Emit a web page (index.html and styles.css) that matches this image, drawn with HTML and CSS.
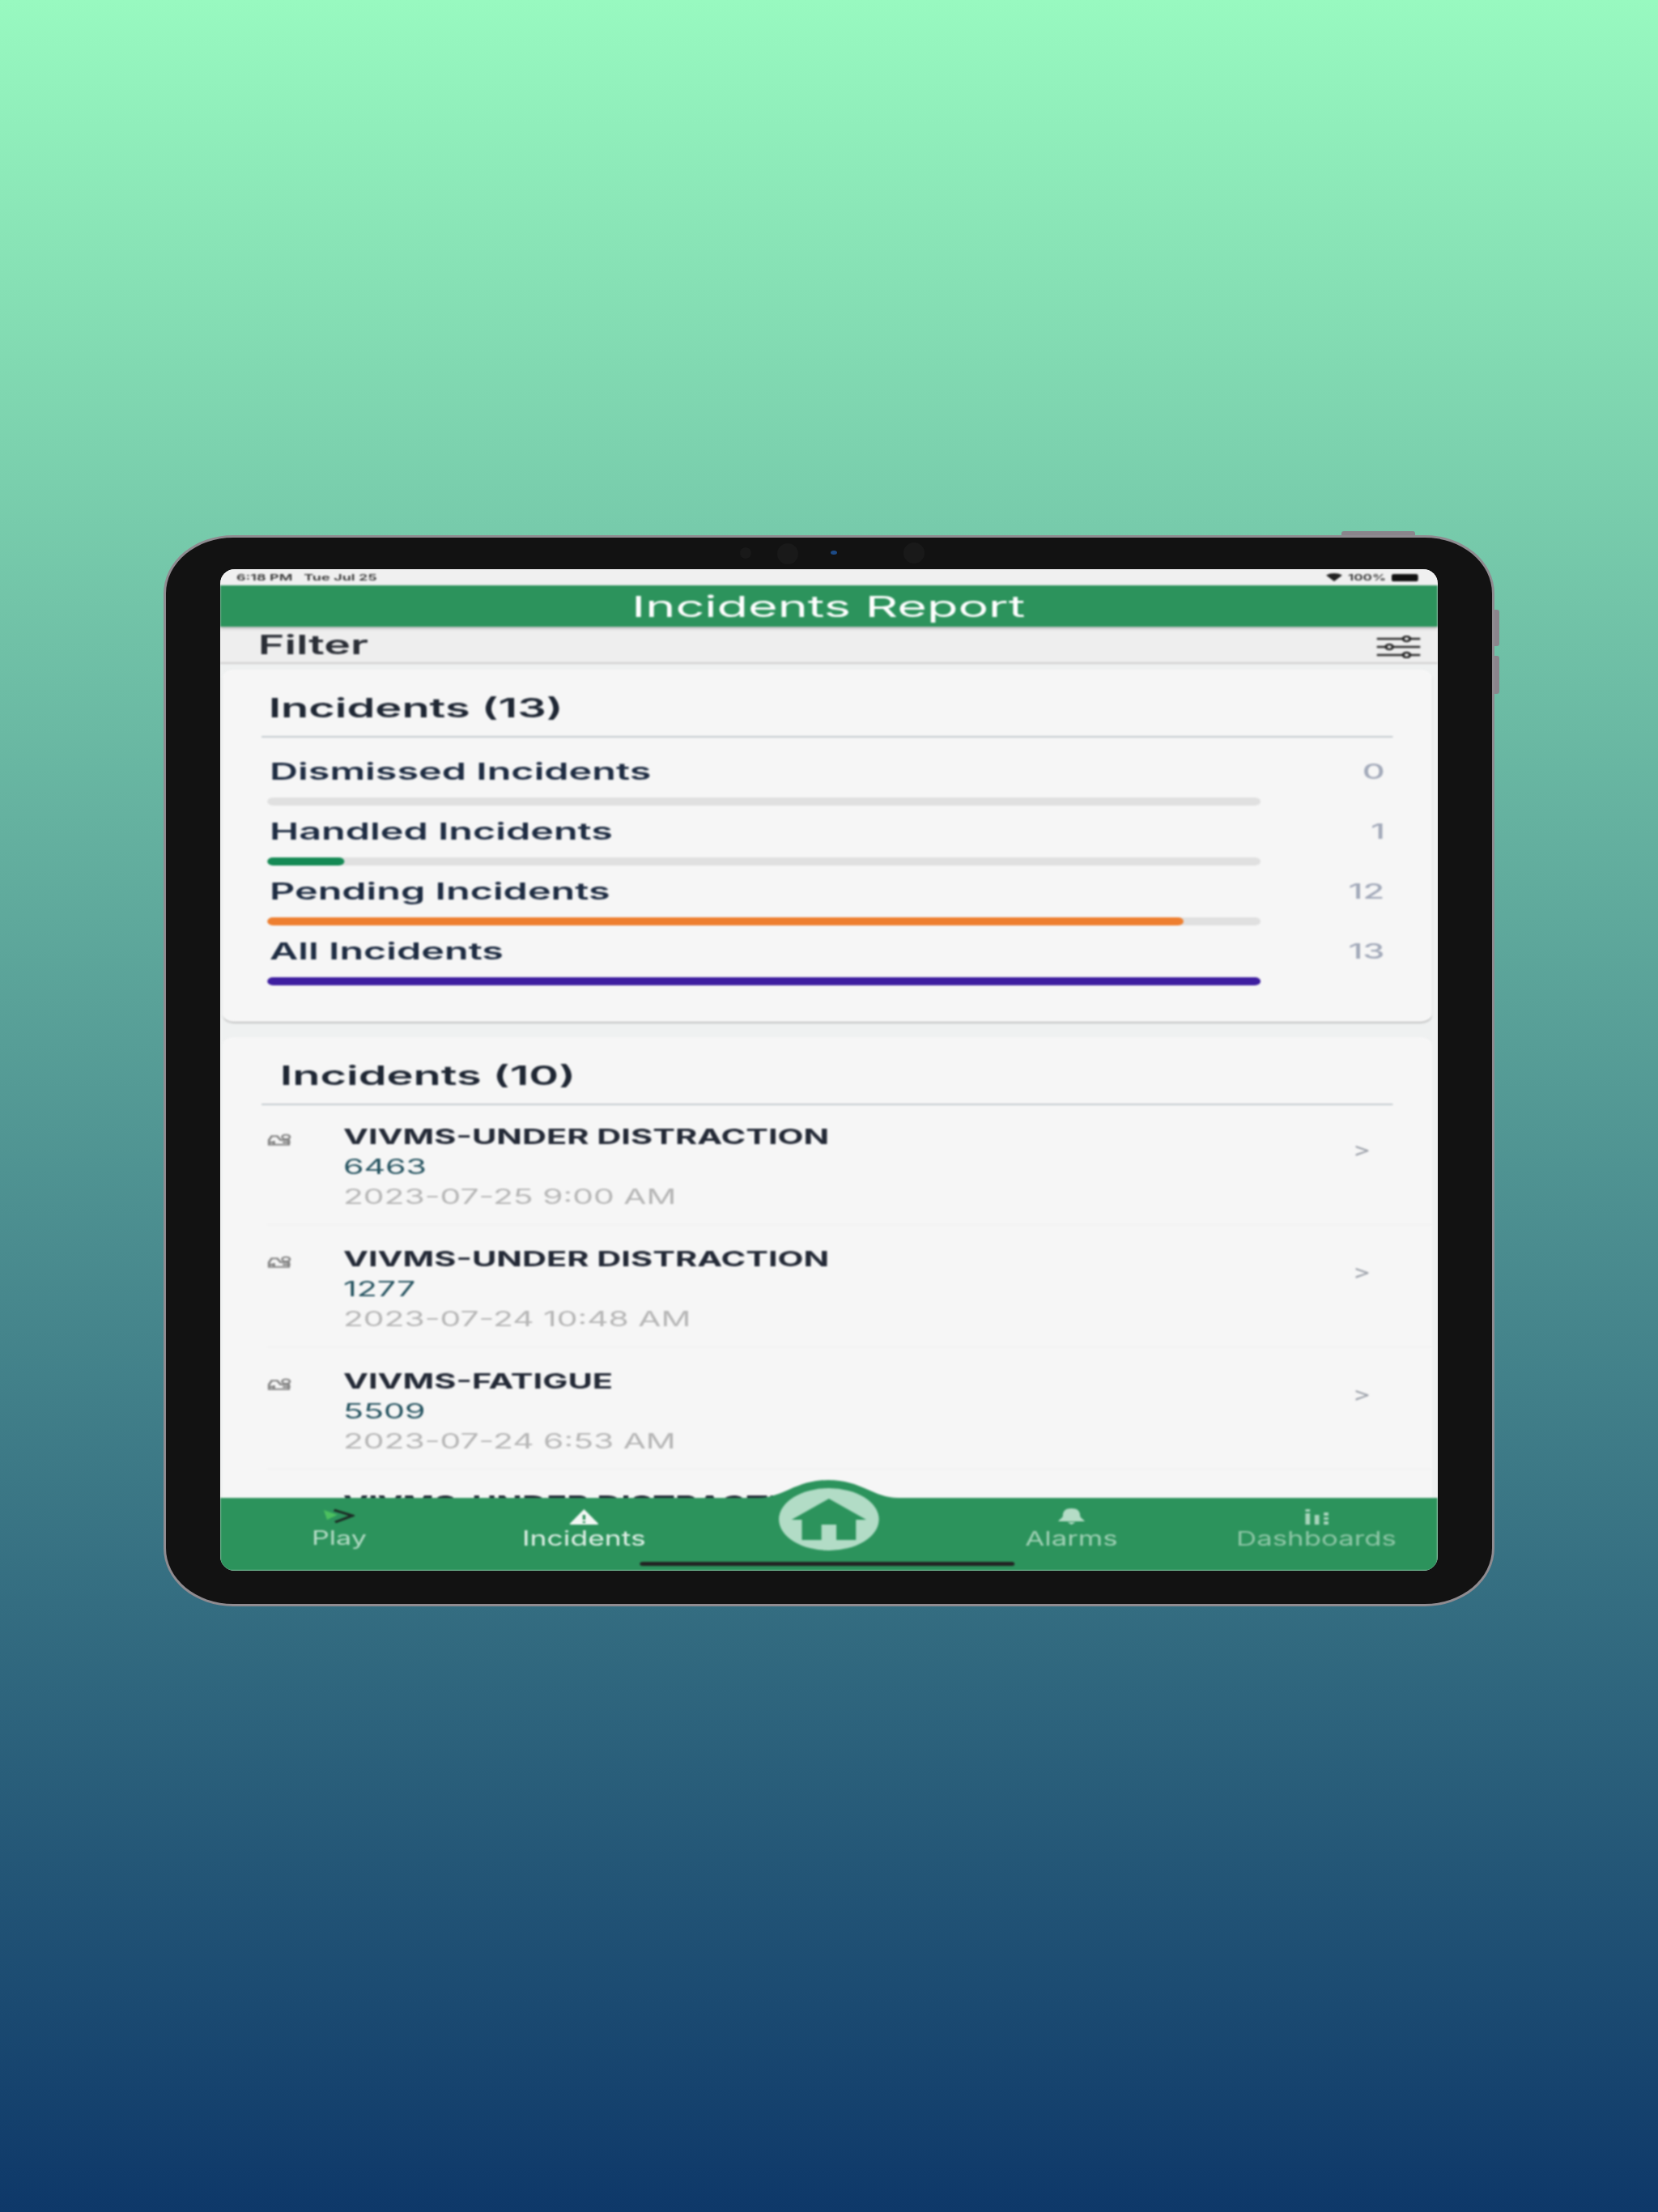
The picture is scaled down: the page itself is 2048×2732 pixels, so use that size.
FILE: index.html
```html
<!DOCTYPE html>
<html lang="en">
<head>
  <meta charset="UTF-8" />
  <meta name="viewport" content="width=device-width, initial-scale=1" />
  <title>Incidents Report</title>
  <link rel="stylesheet" href="styles.css">
</head>
<body>

  <!-- Tablet frame -->
  <div class="device">
    <span class="side-btn top-btn"></span>
    <span class="side-btn vol-up"></span>
    <span class="side-btn vol-down"></span>
    <span class="cam cam-small"></span>
    <span class="cam cam-big"></span>
    <span class="cam cam-blue"></span>
    <span class="cam cam-right"></span>

    <div class="screen">
      <!-- the app is a stretched screenshot, so the whole thing gets scaled sideways -->
      <div class="app">

        <div class="status-bar">
          <span class="status-left">6:18 PM &nbsp; Tue Jul 25</span>
          <div class="status-right">
            <svg class="wifi" viewBox="0 0 14 10"><path d="M0 2.5 C4 -0.8 10 -0.8 14 2.5 L7 10 Z" /></svg>
            <span class="status-pct">100%</span>
            <span class="battery"></span>
          </div>
        </div>

        <div class="header"><span class="header-title">Incidents Report</span></div>

        <div class="filter-row">
          <span class="filter-label">Filter</span>
          <svg class="sliders" viewBox="0 0 38 28">
            <g stroke="#2b2b2b" stroke-width="2.4" fill="#eee">
              <path d="M0 4 H38 M0 14 H38 M0 24 H38" />
              <circle cx="26" cy="4" r="3" />
              <circle cx="11" cy="14" r="3" />
              <circle cx="26" cy="24" r="3" />
            </g>
          </svg>
        </div>

        <div class="content">
          <div class="card stats-card">
            <div class="card-head"><h2>Incidents (13)</h2></div>

            <div class="stat">
              <div class="stat-top"><span class="stat-name">Dismissed Incidents</span><span class="stat-num">0</span></div>
              <div class="bar"></div>
            </div>
            <div class="stat">
              <div class="stat-top"><span class="stat-name">Handled Incidents</span><span class="stat-num">1</span></div>
              <div class="bar"><div class="fill green" style="width: 7.7%"></div></div>
            </div>
            <div class="stat">
              <div class="stat-top"><span class="stat-name">Pending Incidents</span><span class="stat-num">12</span></div>
              <div class="bar"><div class="fill orange" style="width: 92.3%"></div></div>
            </div>
            <div class="stat">
              <div class="stat-top"><span class="stat-name">All Incidents</span><span class="stat-num">13</span></div>
              <div class="bar"><div class="fill purple" style="width: 100%"></div></div>
            </div>
          </div>

          <div class="card list-card">
            <div class="card-head list-head"><h2>Incidents (10)</h2></div>

            <div class="incident">
              <svg class="car" viewBox="0 0 22 16"><use href="#carIcon" /></svg>
              <div class="incident-text">
                <div class="incident-title">VIVMS-UNDER DISTRACTION</div>
                <div class="incident-num">6463</div>
                <div class="incident-date">2023-07-25 9:00 AM</div>
              </div>
              <span class="chevron">&gt;</span>
            </div>
            <div class="incident">
              <svg class="car" viewBox="0 0 22 16"><use href="#carIcon" /></svg>
              <div class="incident-text">
                <div class="incident-title">VIVMS-UNDER DISTRACTION</div>
                <div class="incident-num">1277</div>
                <div class="incident-date">2023-07-24 10:48 AM</div>
              </div>
              <span class="chevron">&gt;</span>
            </div>
            <div class="incident">
              <svg class="car" viewBox="0 0 22 16"><use href="#carIcon" /></svg>
              <div class="incident-text">
                <div class="incident-title">VIVMS-FATIGUE</div>
                <div class="incident-num">5509</div>
                <div class="incident-date">2023-07-24 6:53 AM</div>
              </div>
              <span class="chevron">&gt;</span>
            </div>
            <div class="incident">
              <svg class="car" viewBox="0 0 22 16"><use href="#carIcon" /></svg>
              <div class="incident-text">
                <div class="incident-title">VIVMS-UNDER DISTRACTION</div>
              </div>
            </div>
          </div>
        </div>

        <!-- Bottom tabs -->
        <div class="tabs">
          <svg class="bump" viewBox="0 0 122 22"><path d="M0 22 C22 22 32 0 61 0 C90 0 100 22 122 22 Z" /></svg>

          <div class="tab tab-play">
            <svg viewBox="0 0 27 20">
              <path d="M0 2 L12 8 L3 14 Z" fill="#4cc05f" />
              <path d="M9 2 L25 9 L10 17" fill="none" stroke="#1c2a24" stroke-width="3" />
            </svg>
            <span>Play</span>
          </div>
          <div class="tab tab-incidents">
            <svg viewBox="0 0 27 20">
              <path d="M13.5 1 L26 19 Q26 20 25 20 H2 Q1 20 1 19 Z" fill="#f4f8f5" />
              <path d="M13.5 8 V14 M13.5 16 V18" stroke="#2c935c" stroke-width="2.4" />
            </svg>
            <span>Incidents</span>
          </div>
          <div class="tab tab-home">
            <div class="home-btn">
              <svg viewBox="0 0 65 51">
                <path d="M32.5 0 L65 26 H56 V51 H39 V32 H26 V51 H9 V26 H0 Z" fill="#2c935c" />
              </svg>
            </div>
          </div>
          <div class="tab tab-alarms">
            <svg viewBox="0 0 27 20">
              <path d="M13.5 0 C7 0 6 5 6 9 C6 12 3 13 2 16 H25 C24 13 21 12 21 9 C21 5 20 0 13.5 0 Z M10 17 H17 L13.5 20 Z" fill="#b5dcc6" />
            </svg>
            <span>Alarms</span>
          </div>
          <div class="tab tab-dash">
            <svg viewBox="0 0 27 20">
              <path d="M4 1 H8 V4 H4 Z M4 6 H8 V20 H4 Z M12 8 H16 V20 H12 Z M20 5 H24 V9 H20 Z M20 11 H24 V14 H20 Z M20 16 H24 V20 H20 Z" fill="#a9d5bc" />
            </svg>
            <span>Dashboards</span>
          </div>

          <div class="home-indicator"></div>
        </div>

      </div>
    </div>
  </div>

  <svg class="defs">
    <symbol id="carIcon" viewBox="0 0 22 16">
      <g fill="none" stroke="#858585" stroke-width="2.2">
        <path d="M1.5 14 V8 L4 3 H9 L12 8 H19.5 V14 Z" />
        <path d="M6 9 V14 M1 11 H5 M14 11 H21" />
      </g>
      <ellipse cx="17" cy="4" rx="3.5" ry="2.8" fill="none" stroke="#858585" stroke-width="2" />
    </symbol>
  </svg>

</body>
</html>
```

FILE: styles.css
```css
html, body {
  margin: 0;
  padding: 0;
}

body {
  height: 2732px;
  padding-top: 661px;
  box-sizing: border-box;
  background: linear-gradient(180deg, #98f9c0 0%, #0e3869 100%);
  font-family: 'Inter', 'Liberation Sans', sans-serif;
  overflow: hidden;
}

.defs {
  display: none;
}

/* Frame */
.device {
  position: relative;
  width: 1644px;
  height: 1323px;
  margin: 0 auto;
  padding: 39px 67px 0;
  box-sizing: border-box;
  background: #121212;
  border: 3px solid #8f8b90;
  border-radius: 86px / 72px;
}

.side-btn {
  position: absolute;
  background: #8a858c;
}

.top-btn {
  left: 1452px;
  top: -8px;
  width: 91px;
  height: 5px;
  border-radius: 3px 3px 0 0;
}

.vol-up, .vol-down {
  left: 1641px;
  width: 6px;
  border-radius: 0 3px 3px 0;
}

.vol-up {
  top: 89px;
  height: 45px;
}

.vol-down {
  top: 146px;
  height: 47px;
}

.cam {
  position: absolute;
  border-radius: 50%;
  background: #191919;
}

.cam-small {
  left: 709px;
  top: 12px;
  width: 14px;
  height: 14px;
}

.cam-big {
  left: 755px;
  top: 7px;
  width: 26px;
  height: 26px;
}

.cam-blue {
  left: 821px;
  top: 16px;
  width: 8px;
  height: 5px;
  background: #1c4a86;
}

.cam-right {
  left: 911px;
  top: 6px;
  width: 26px;
  height: 26px;
}

.screen {
  width: 1504px;
  height: 1237px;
  overflow: hidden;
  border-radius: 18px;
  background: #eff1f1;
}

/* 1059px wide app, stretched to the 1504px of the screen */
.app {
  width: 1059px;
  height: 1237px;
  display: flex;
  flex-direction: column;
  transform: scaleX(1.42);
  transform-origin: left top;
  filter: blur(0.8px);
}

.status-bar {
  height: 20px;
  flex: none;
  padding: 0 17px 0 14px;
  display: flex;
  justify-content: space-between;
  align-items: center;
  background: #f0f0f0;
  color: #333;
  font-size: 11px;
  font-weight: 600;
}

.status-left {
  transform: scaleX(1.16);
  transform-origin: left center;
}

.status-right {
  display: flex;
  align-items: center;
  gap: 5px;
}

.status-pct {
  transform: scaleX(1.1);
  transform-origin: right center;
}

.wifi {
  width: 14px;
  height: 10px;
  margin-right: 3px;
  fill: #222;
}

.battery {
  width: 23px;
  height: 9px;
  border-radius: 2px;
  background: #111;
}

.header {
  height: 51px;
  flex: none;
  position: relative;
  z-index: 2;
  background: #2c935c;
  color: #fff;
  font-size: 36px;
  line-height: 53px;
  text-align: center;
  box-shadow: 0 2px 3px rgba(0,0,0,0.25);
}

.header-title {
  display: inline-block;
  transform: scaleX(1.23);
}

.filter-row {
  height: 46px;
  flex: none;
  padding: 0 15px 0 33px;
  box-sizing: border-box;
  display: flex;
  justify-content: space-between;
  align-items: center;
  background: #eeeeee;
  border-bottom: 2px solid #cfcfcf;
}

.filter-label {
  font-size: 32px;
  font-weight: 600;
  color: #2a2e36;
  transform: scaleX(1.22);
  transform-origin: left center;
}

.sliders {
  width: 38px;
  height: 28px;
  margin-top: 5px;
}

.content {
  flex: 1;
  min-height: 0;
  overflow: hidden;
  padding: 7px 5px 0 2px;
}

.card {
  background: #f6f6f6;
  border-radius: 10px;
}

.stats-card {
  height: 435px;
  box-sizing: border-box;
  box-shadow: 0 2px 2px -1px rgba(0,0,0,0.35);
}

.list-card {
  margin-top: 19px;
  padding-bottom: 40px;
}

.card-head {
  height: 84px;
  margin: 0 34px;
  box-sizing: border-box;
  padding-left: 6px;
  border-bottom: 2px solid #c5ccd0;
  display: flex;
  align-items: center;
}

.list-head {
  padding-left: 16px;
  margin-bottom: -3px;
}

.card-head h2 {
  margin: 12px 0 0;
  font-size: 32px;
  font-weight: 600;
  color: #1e2633;
  transform: scaleX(1.23);
  transform-origin: left center;
}

.stat {
  margin-left: 39px;
  padding-right: 41px;
  margin-bottom: 10px;
}

.stats-card .card-head {
  margin-bottom: 20px;
}

.stat-top {
  height: 44px;
  padding-left: 2px;
  display: flex;
  justify-content: space-between;
  align-items: center;
  font-size: 28px;
  font-weight: 600;
  color: #1e2c42;
}

.stat-name {
  transform: scaleX(1.22);
  transform-origin: left center;
}

.stat-top .stat-num {
  font-size: 25px;
  font-weight: 500;
  color: #a3aaba;
  transform: scaleX(1.22);
  transform-origin: right center;
}

.bar {
  width: 864px;
  height: 10px;
  margin-top: 10px;
  border-radius: 5px;
  background: #e0e0e0;
}

.fill {
  height: 100%;
  border-radius: 5px;
}

.green {
  background: #158a55;
}

.orange {
  background: #ee7f30;
}

.purple {
  background: #3e1ea0;
}

/* Incident rows */
.incident {
  position: relative;
  display: flex;
  margin-left: 39px;
  padding: 24px 0 15px;
  border-bottom: 1px solid #efefef;
}

.car {
  width: 21px;
  height: 16px;
  flex: none;
  margin: 14px 45px 0 0;
}

.incident-text {
  flex: 1;
  line-height: 37px;
  font-size: 25px;
}

.incident-title {
  font-weight: 700;
  color: #232936;
  transform: scaleX(1.17);
  transform-origin: left center;
}

.incident-num {
  color: #24525f;
  transform: scaleX(1.16);
  transform-origin: left center;
}

.incident-date {
  color: #b6b6b6;
  transform: scaleX(1.15);
  transform-origin: left center;
}

.chevron {
  margin: 19px 53px 0 0;
  font-size: 24px;
  color: #9a9fa8;
}

/* Bottom tabs */
.tabs {
  position: relative;
  z-index: 3;
  height: 90px;
  flex: none;
  display: flex;
  background: #2c935c;
}

.bump {
  position: absolute;
  left: 468px;
  top: -22px;
  width: 122px;
  height: 22px;
  fill: #2c935c;
}

.tab {
  flex: 1 1 0;
  box-sizing: border-box;
  padding-top: 13px;
  display: flex;
  flex-direction: column;
  align-items: center;
  font-size: 25px;
  line-height: 30px;
  color: #cfe6d8;
}

.tab svg {
  width: 27px;
  height: 20px;
  flex: none;
  margin-bottom: 2px;
}

.tab-play {
  color: #b5dcc6;
  padding-right: 6px;
  font-size: 24px;
}

.tab-incidents {
  color: #dff0e6;
  padding-right: 10px;
}

.tab-alarms {
  color: #9fd0b4;
  padding-right: 6px;
  font-size: 24.5px;
}

.tab-dash {
  color: #8ec6a6;
  padding-right: 2px;
  font-size: 24.5px;
}

.home-btn {
  position: absolute;
  left: 486px;
  top: -12px;
  width: 87px;
  height: 77px;
  border-radius: 50%;
  background: #b2dcc6;
  display: flex;
  justify-content: center;
  align-items: center;
}

.home-btn svg {
  width: 65px;
  height: 51px;
  margin: 0;
}

.home-indicator {
  position: absolute;
  left: 365px;
  bottom: 6px;
  width: 326px;
  height: 5px;
  border-radius: 3px;
  background: #222;
}
```
